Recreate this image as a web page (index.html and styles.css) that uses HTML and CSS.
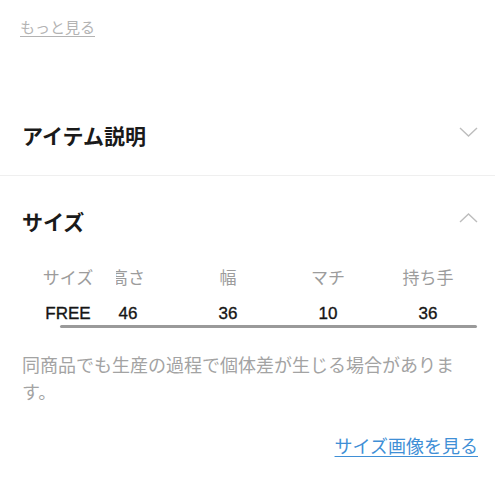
FILE: index.html
```html
<!DOCTYPE html>
<html lang="ja">
<head>
<meta charset="utf-8">
<link rel="stylesheet" href="styles.css">
</head>
<body>
<div class="page">
  <div class="more-wrap"><a class="more" href="#">もっと見る</a></div>

  <section class="acc acc-closed">
    <div class="acc-head acc-head-1">
      <h2 class="acc-title">アイテム説明</h2>
      <svg class="chev chev-down" width="19" height="10" viewBox="0 0 19 10"><path d="M1 1 L9.5 9 L18 1" fill="none" stroke="#bdbdbd" stroke-width="1.4"/></svg>
    </div>
  </section>

  <section class="acc acc-open">
    <div class="acc-head acc-head-2">
      <h2 class="acc-title">サイズ</h2>
      <svg class="chev chev-up" width="19" height="10" viewBox="0 0 19 10"><path d="M1 9 L9.5 1 L18 9" fill="none" stroke="#bdbdbd" stroke-width="1.4"/></svg>
    </div>

    <div class="size-table">
      <div class="trow thead">
        <div class="cell-fixed">サイズ</div>
        <div class="cells">
          <div class="cell">高さ</div>
          <div class="cell">幅</div>
          <div class="cell">マチ</div>
          <div class="cell">持ち手</div>
        </div>
      </div>
      <div class="trow tbody">
        <div class="cell-fixed">FREE</div>
        <div class="cells">
          <div class="cell">46</div>
          <div class="cell">36</div>
          <div class="cell">10</div>
          <div class="cell">36</div>
        </div>
      </div>
      <div class="scroll-bar"></div>
    </div>

    <p class="note">同商品でも生産の過程で個体差が生じる場合があります。</p>

    <div class="link-row"><a class="size-link" href="#">サイズ画像を見る</a></div>
  </section>
</div>
</body>
</html>
```

FILE: styles.css
```css
html, body {
  margin: 0;
  padding: 0;
  background: #ffffff;
}

body {
  font-family: "Noto Sans CJK JP", "Noto Sans", sans-serif;
  color: #1a1a1a;
  width: 500px;
  overflow: hidden;
}

.page {
  width: 500px;
}

.more-wrap {
  padding: 17px 0 0 20px;
  height: 95px;
  box-sizing: border-box;
  font-size: 15px;
  line-height: 20px;
}

.more {
  font-size: 15px;
  line-height: 20px;
  color: #b3b3b3;
  text-decoration: underline;
  text-underline-offset: 3px;
}

.acc-closed {
  border-bottom: 1px solid #efefef;
  margin-right: 5px;
}

.acc-head {
  display: flex;
  align-items: center;
  justify-content: space-between;
  padding: 0 22px 0 22px;
}

.acc-closed .acc-head {
  padding-right: 17px;
}

.acc-head-1 {
  height: 80px;
}

.acc-head-2 {
  height: 90px;
}

.acc-title {
  margin: 0;
  font-size: 21px;
  line-height: 30px;
  font-weight: 700;
  color: #1a1a1a;
}

.chev {
  display: block;
  flex: none;
}

.chev-down {
  margin-bottom: 7px;
}

.chev-up {
  margin-bottom: 6px;
}

.size-table {
  padding: 0 22px 0 20px;
}

.trow {
  display: flex;
  width: 458px;
}

.cell-fixed {
  width: 96px;
  flex: none;
  text-align: center;
  background: #ffffff;
  position: relative;
  z-index: 1;
}

.cells {
  display: flex;
  margin-left: -38px;
}

.cell {
  width: 100px;
  flex: none;
  text-align: center;
}

.thead {
  height: 22px;
  font-size: 17px;
  line-height: 22px;
  color: #9c9c9c;
  margin-bottom: 15px;
}

.tbody {
  height: 22px;
  font-family: "Liberation Sans", "Noto Sans CJK JP", sans-serif;
  font-size: 17px;
  line-height: 22px;
  color: #151515;
  -webkit-text-stroke: 0.35px #151515;
}

.scroll-bar {
  margin: 0 0 0 40px;
  width: 417px;
  height: 3px;
  border-radius: 2px;
  background: #9a9a9a;
}

.note {
  margin: 23px 22px 0 22px;
  font-size: 18px;
  line-height: 27px;
  color: #a3a3a3;
}

.link-row {
  display: flex;
  justify-content: flex-end;
  padding: 0 22px;
  margin-top: 28px;
}

.size-link {
  font-size: 18px;
  line-height: 24px;
  color: #3f8fd6;
  text-decoration: underline;
  text-underline-offset: 3px;
}
```
